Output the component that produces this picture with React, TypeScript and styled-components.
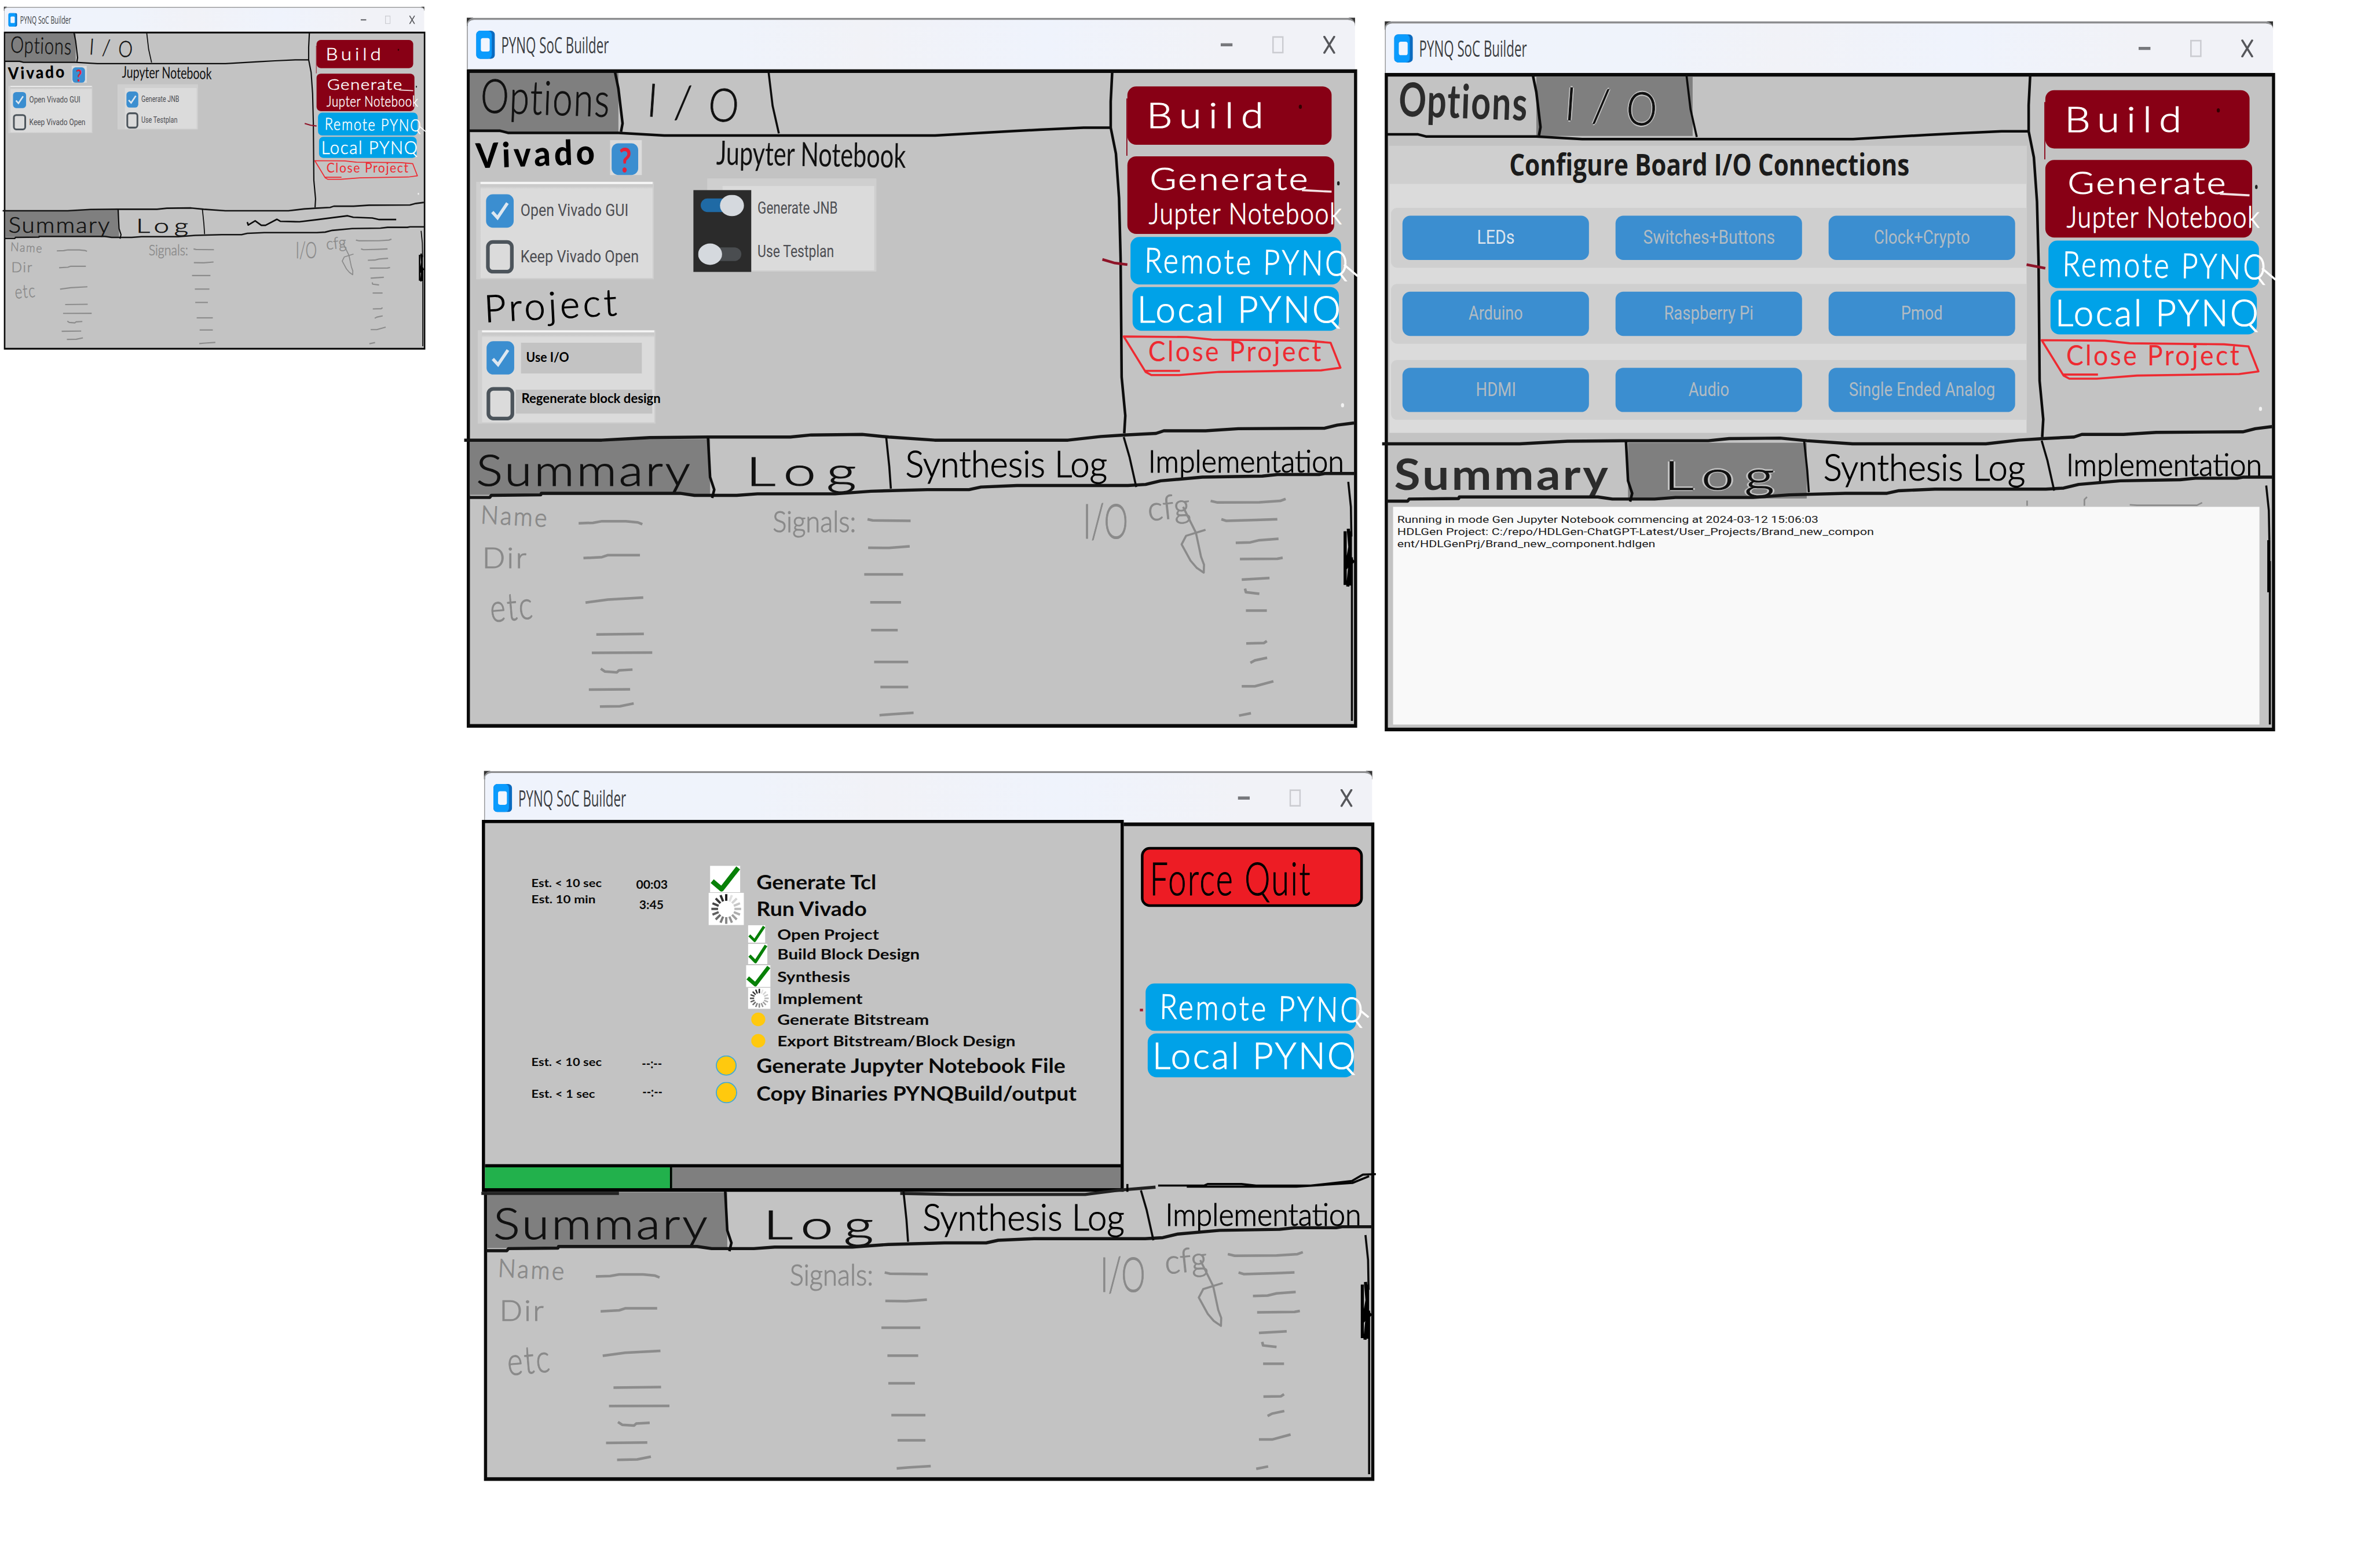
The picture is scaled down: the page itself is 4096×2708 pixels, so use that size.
import React, { useLayoutEffect, useRef, useState } from "react";
import styled, { createGlobalStyle, css } from "styled-components";

/* ---------- palette ---------- */
const grey = "#c3c3c3";
const darkGrey = "#7f7f7f";
const maroon = "#880015";
const sky = "#00a2e8";
const red = "#ed1c24";
const pencil = "#8a8a8a";

const Global = createGlobalStyle`
  html, body { margin: 0; padding: 0; background: #fff; }
  * { box-sizing: border-box; }
`;

const Viewport = styled.div`
  width: 4096px;
  height: 2708px;
  overflow: hidden;
  background: #fff;
`;

/* The canvas is laid out at 4553x3010 and scaled down to the viewport. */
const Canvas = styled.main`
  position: relative;
  width: 4553px;
  height: 3010px;
  transform: scale(0.89962);
  transform-origin: 0 0;
`;

/* ---------- text stretched to a given width ---------- */
const faces = {
  hand: `Lato, "Open Sans", sans-serif`,
  segoe: `"Open Sans", "Noto Sans", sans-serif`,
  roboto: `Roboto, "Liberation Sans", sans-serif`,
  calibri: `Lato, "Open Sans", sans-serif`,
};

type InkProps = {
  w: number;
  h: number;
  size: number;
  color?: string;
  weight?: number;
  face?: keyof typeof faces;
  tilt?: number;
  mt?: number;
  ml?: number;
  spacing?: number;
  halo?: boolean;
  children: string;
};

const InkBox = styled.span<{
  $w: number; $h: number; $size: number; $color: string; $weight: number; $spacing: number;
  $face: keyof typeof faces; $tilt: number; $mt: number; $ml: number; $halo: boolean;
}>`
  display: block;
  flex: none;
  width: ${(p) => p.$w}px;
  height: ${(p) => p.$h}px;
  margin-top: ${(p) => p.$mt}px;
  margin-left: ${(p) => p.$ml}px;
  line-height: ${(p) => p.$h}px;
  font-family: ${(p) => faces[p.$face]};
  font-size: ${(p) => p.$size}px;
  font-weight: ${(p) => p.$weight};
  letter-spacing: ${(p) => p.$spacing}px;
  color: ${(p) => p.$color};
  white-space: pre;
  transform: rotate(${(p) => p.$tilt}deg);
  ${(p) =>
    p.$weight === 300 &&
    css`
      -webkit-text-stroke: 1.3px ${p.$color};
    `}
  ${(p) =>
    p.$halo &&
    css`
      text-shadow: -3px 0 ${grey}, 3px 0 ${grey}, 0 -3px ${grey}, 0 3px ${grey};
    `}
`;

const InkRun = styled.span`
  display: inline-block;
  transform-origin: 0 50%;
`;

function Ink({
  w, h, size, color = "#111", weight = 400, face = "hand", tilt = 0, mt = 0, ml = 0, spacing = 0, halo = false, children,
}: InkProps) {
  const ref = useRef<HTMLSpanElement>(null);
  const [k, setK] = useState(1);
  useLayoutEffect(() => {
    const measure = () => {
      if (ref.current && ref.current.offsetWidth) setK(w / (ref.current.offsetWidth - spacing));
    };
    measure();
    document.fonts?.ready.then(measure);
  }, [w, spacing, children]);
  return (
    <InkBox
      $w={w} $h={h} $size={size} $color={color} $weight={weight} $face={face}
      $tilt={tilt} $mt={mt} $ml={ml} $spacing={spacing} $halo={halo}
    >
      <InkRun ref={ref} style={{ transform: `scaleX(${k})` }}>{children}</InkRun>
    </InkBox>
  );
}

/* ---------- window shell ---------- */
const Win = styled.section<{ $x: number; $y: number; $mini?: boolean }>`
  position: absolute;
  left: ${(p) => p.$x}px;
  top: ${(p) => p.$y}px;
  width: 1710px;
  height: 1367px;
  padding: 4px 0 0 1px;
  display: flex;
  flex-direction: column;
  ${(p) =>
    p.$mini &&
    css`
      transform: scale(0.4733, 0.4829);
      transform-origin: 0 0;
    `}
`;

const TitleBar = styled.header`
  flex: none;
  height: 99px;
  margin-right: 4px;
  padding: 0 38px 0 16px;
  display: flex;
  align-items: center;
  border-top: 4px solid #8c8d8f;
  border-left: 2px solid #9a9b9d;
  border-radius: 14px 14px 0 0;
  background: linear-gradient(90deg, #eff3fc 0, #eff3fb 30%, #f1f2f7 45%, #eff3fc 65%, #f1f2f7 85%);
`;

const Corners = styled.div`
  flex: none;
  background: linear-gradient(#333, #333) 0 0 / 12px 16px no-repeat,
    linear-gradient(#333, #333) calc(100% - 4px) 0 / 12px 16px no-repeat;
`;

const Controls = styled.div`
  margin-left: auto;
  display: flex;
  align-items: center;
  gap: 76px;
`;

const Body = styled.div`
  flex: 1;
  min-height: 0;
  display: flex;
  flex-direction: column;
  border: solid #0a0a0a;
  border-width: 7px 6px;
  background: ${grey};
`;

const Upper = styled.div`
  flex: none;
  height: 703px;
  display: flex;
`;

const MainArea = styled.div`
  flex: none;
  width: 1246px;
  display: flex;
  flex-direction: column;
`;

const TabRow = styled.nav<{ $h: number }>`
  flex: none;
  height: ${(p) => p.$h}px;
  display: flex;
`;

const Tab = styled.div<{ $w?: number; $on?: boolean; $pl: number }>`
  width: ${(p) => (p.$w ? `${p.$w}px` : "auto")};
  flex: ${(p) => (p.$w ? "none" : 1)};
  padding-left: ${(p) => p.$pl}px;
  display: flex;
  background: ${(p) => (p.$on ? darkGrey : "transparent")};
`;

const Over = styled.svg`
  position: absolute;
  left: 0;
  top: 0;
  width: 1710px;
  height: 1367px;
  overflow: visible;
  pointer-events: none;
`;

const AppIcon = () => (
  <svg width="36" height="54" viewBox="0 0 36 54">
    <rect width="36" height="54" rx="8" fill="#0b6bc0" />
    <rect width="30" height="54" rx="8" fill="#0a9bfd" />
    <rect x="9" y="14" width="17" height="26" rx="4" fill="#f1f5fd" />
  </svg>
);

const Chrome = () => (
  <Corners>
    <TitleBar>
      <AppIcon />
      <Ink w={207} h={60} size={43} face="segoe" color="#3c3e42" ml={12}>PYNQ SoC Builder</Ink>
      <Controls>
        <svg width="23" height="34"><path d="M0 17H23" stroke="#77787c" strokeWidth="6" /></svg>
        <svg width="22" height="34"><rect x="1.5" y="2" width="19" height="30" fill="none" stroke="#cbccd1" strokeWidth="3" /></svg>
        <svg width="23" height="34"><path d="M1 0L22 34M22 0L1 34" stroke="#56575b" strokeWidth="4" /></svg>
      </Controls>
    </TitleBar>
  </Corners>
);

/* ---------- side buttons ---------- */
const Side = styled.aside<{ $top: number; $left: number }>`
  flex: 1;
  padding: ${(p) => p.$top}px 0 0 ${(p) => p.$left}px;
  display: flex;
  flex-direction: column;
  align-items: flex-start;
`;

const SideButton = styled.div<{
  $w: number; $h: number; $bg: string; $mt?: number; $ml?: number; $pl: number; $outlined?: boolean;
}>`
  flex: none;
  width: ${(p) => p.$w}px;
  height: ${(p) => p.$h}px;
  margin: ${(p) => p.$mt ?? 0}px 0 0 ${(p) => p.$ml ?? 0}px;
  padding-left: ${(p) => p.$pl}px;
  display: flex;
  flex-direction: column;
  justify-content: center;
  border-radius: 17px;
  background: ${(p) => p.$bg};
  ${(p) => p.$outlined && css`border: 5px solid #000;`}
`;

const RemoteLocal = ({ mt, ml }: { mt: number; ml: number }) => (
  <>
    <SideButton $w={404} $h={91} $bg={sky} $mt={mt} $ml={ml} $pl={27}>
      <Ink w={390} h={80} size={66} weight={300} spacing={5} tilt={1} color="#fff">Remote PYNQ</Ink>
    </SideButton>
    <SideButton $w={396} $h={84} $bg={sky} $mt={5} $ml={ml + 4} $pl={9}>
      <Ink w={390} h={80} size={70} weight={300} spacing={4} mt={-2} color="#fff">Local PYNQ</Ink>
    </SideButton>
  </>
);

const BuildSide = () => (
  <Side $top={26} $left={16}>
    <SideButton $w={392} $h={112} $bg={maroon} $pl={37}>
      <Ink w={224} h={80} size={68} weight={300} spacing={12} color="#fff" mt={-4}>Build</Ink>
    </SideButton>
    <SideButton $w={397} $h={149} $bg={maroon} $mt={22} $pl={43}>
      <Ink w={303} h={66} size={60} weight={300} spacing={3} color="#fff">Generate</Ink>
      <Ink w={370} h={66} size={58} weight={300} color="#fff" spacing={2} ml={-2}>Jupter Notebook</Ink>
    </SideButton>
    <RemoteLocal mt={6} ml={6} />
    <SideButton $w={416} $h={75} $bg="transparent" $mt={11} $ml={-7} $pl={47}>
      <Ink w={332} h={54} size={53} color="#ee2a31" spacing={4} mt={-20}>Close Project</Ink>
    </SideButton>
  </Side>
);

const QuitSide = () => (
  <Side $top={40} $left={40}>
    <SideButton $w={426} $h={115} $bg={red} $ml={-7} $pl={12} $outlined>
      <Ink w={308} h={100} size={88} weight={300} color="#000" spacing={4}>Force Quit</Ink>
    </SideButton>
    <RemoteLocal mt={147} ml={2} />
  </Side>
);

/* ---------- options page ---------- */
const OptionsPage = styled.div`
  flex: 1;
  min-height: 0;
  display: flex;
`;

const OptionsColumn = styled.div<{ $w: number }>`
  flex: none;
  width: ${(p) => p.$w}px;
  padding-left: 11px;
  display: flex;
  flex-direction: column;
`;

const HeadingRow = styled.div<{ $h: number }>`
  flex: none;
  height: ${(p) => p.$h}px;
  display: flex;
`;

const Panel = styled.div<{ $w: number; $h: number; $ml: number; $pl: number; $line?: boolean }>`
  flex: none;
  width: ${(p) => p.$w}px;
  height: ${(p) => p.$h}px;
  margin-left: ${(p) => p.$ml}px;
  padding-left: ${(p) => p.$pl}px;
  display: flex;
  flex-direction: column;
  border: solid #cfcfcf;
  border-width: ${(p) => (p.$line ? "0 2px 2px 8px" : "14px 4px 2px 29px")};
  background: ${(p) =>
    p.$line ? "linear-gradient(#f4f4f4 0 4px, #cacaca 4px 9px, #dbdbdb 14px)" : "#dbdbdb"};
`;

const OptionRow = styled.label<{ $mt: number }>`
  height: 64px;
  margin-top: ${(p) => p.$mt}px;
  display: flex;
  align-items: center;
`;

const Box = styled.span<{ $on?: boolean; $w?: number }>`
  flex: none;
  width: ${(p) => p.$w ?? 53}px;
  height: 64px;
  display: grid;
  place-items: center;
  border-radius: 13px;
  border: ${(p) => (p.$on ? "none" : "7px solid #4c545b")};
  background: ${(p) => (p.$on ? "#3b8ed0" : "transparent")};
`;

const Tick = () => (
  <svg width="36" height="38" viewBox="0 0 36 38">
    <path d="M3 21L13 32L32 4" fill="none" stroke="#dde7f0" strokeWidth="6" />
  </svg>
);

const Check = ({ on, w }: { on?: boolean; w?: number }) => (
  <Box $on={on} $w={w}>{on && <Tick />}</Box>
);

const HelpTile = styled.div`
  width: 61px;
  height: 67px;
  margin: 15px 0 0 30px;
  padding: 6px 0 0 3px;
  background: #dcdcdc;
`;

const HelpFace = styled.div`
  width: 51px;
  height: 61px;
  border-radius: 13px;
  display: grid;
  place-items: center;
  background: #3b8ed0;
`;

const Patch = styled.div<{ $w: number; $h: number; $ml: number; $mt?: number; $pt: number; $pl: number }>`
  flex: none;
  width: ${(p) => p.$w}px;
  height: ${(p) => p.$h}px;
  margin: ${(p) => p.$mt ?? 0}px 0 0 ${(p) => p.$ml}px;
  padding: ${(p) => p.$pt}px 0 0 ${(p) => p.$pl}px;
  background: ${grey};
`;

const SwitchShift = styled.div`
  display: flex;
  margin-left: -11px;
`;

const SwitchTile = styled.div`
  flex: none;
  width: 111px;
  height: 157px;
  margin: -156px 0 0 -27px;
  padding: 9px 0 0 9px;
  background: #2b2b2b;
  position: relative;
`;

const OptionLabel = ({
  w, ml = 13, mt = -2, size = 33, children,
}: { w: number; ml?: number; mt?: number; size?: number; children: string }) => (
  <Ink w={w} h={50} size={size} face="roboto" color="#4d4e53" ml={ml} mt={mt}>{children}</Ink>
);

const Switches = () => (
  <SwitchTile>
    <svg width="96" height="140" viewBox="0 0 96 140">
      <rect x="5" y="7" width="78" height="26" rx="13" fill="#1f6aa5" />
      <ellipse cx="65" cy="20.500" rx="23" ry="20.500" fill="#d5d9de" />
      <rect x="12" y="101" width="71" height="26" rx="13" fill="#4a4d50" />
      <ellipse cx="23" cy="114" rx="23" ry="20.500" fill="#d5d9de" />
    </svg>
  </SwitchTile>
);

const Options = ({ mini }: { mini?: boolean }) => (
  <OptionsPage>
    <OptionsColumn $w={456}>
      <HeadingRow $h={95}>
        <Ink w={228} h={70} size={66} weight={900} color="#000" spacing={7} mt={5} tilt={-2}>Vivado</Ink>
        <HelpTile>
          <HelpFace>
            <Ink w={24} h={60} size={66} weight={700} color="#e3213a">?</Ink>
          </HelpFace>
        </HelpTile>
      </HeadingRow>
      <Panel $w={341} $h={187} $ml={1} $pl={11} $line>
        <OptionRow $mt={24}><Check on /><OptionLabel w={207}>Open Vivado GUI</OptionLabel></OptionRow>
        <OptionRow $mt={24}><Check /><OptionLabel w={227} mt={0}>Keep Vivado Open</OptionLabel></OptionRow>
      </Panel>
      {!mini && (
        <>
          <HeadingRow $h={98}>
            <Ink w={255} h={80} size={72} weight={300} color="#000" spacing={6} tilt={-3} ml={16} mt={8}>Project</Ink>
          </HeadingRow>
          <Panel $w={341} $h={179} $ml={4} $pl={9} $line>
            <OptionRow $mt={21}>
              <Check on />
              <Patch $w={232} $h={59} $ml={13} $pt={8} $pl={10}>
                <Ink w={82} h={38} size={25} weight={700} face="calibri" color="#000">Use I/O</Ink>
              </Patch>
            </OptionRow>
            <OptionRow $mt={24}>
              <Check />
              <Patch $w={262} $h={46} $ml={3} $mt={-8} $pt={0} $pl={11}>
                <Ink w={267} h={32} size={25} weight={700} face="calibri" color="#000">Regenerate block design</Ink>
              </Patch>
            </OptionRow>
          </Panel>
        </>
      )}
    </OptionsColumn>
    <OptionsColumn $w={400}>
      <HeadingRow $h={89}>
        <Ink w={364} h={76} size={64} ml={6} mt={3} tilt={1}>Jupyter Notebook</Ink>
      </HeadingRow>
      <Panel $w={324} $h={178} $ml={-11} $pl={mini ? 6 : 66}>
        <OptionRow $mt={mini ? 14 : 8}>
          {mini && <Check on w={48} />}
          <OptionLabel w={154} ml={mini ? 12 : 1} mt={mini ? -2 : 3} size={32}>Generate JNB</OptionLabel>
        </OptionRow>
        <OptionRow $mt={mini ? 19 : 18}>
          {mini && <Check w={48} />}
          <OptionLabel w={147} ml={mini ? 12 : 1} mt={mini ? -2 : 7} size={32}>Use Testplan</OptionLabel>
        </OptionRow>
      </Panel>
      {!mini && <SwitchShift><Switches /></SwitchShift>}
    </OptionsColumn>
  </OptionsPage>
);

/* ---------- board I/O page ---------- */
const Board = styled.div`
  flex: none;
  width: 1223px;
  height: 551px;
  margin: 19px 0 0 3px;
  display: flex;
  flex-direction: column;
  background: #dbdbdb;
`;

const BoardTitle = styled.div`
  height: 73px;
  padding-left: 230px;
  background: #cfcfcf;
`;

const BoardRows = styled.div`
  padding: 46px 0 0 3px;
  display: flex;
  flex-direction: column;
  gap: 31px;
`;

const BoardRow = styled.div`
  height: 115px;
  padding-left: 22px;
  display: grid;
  grid-template-columns: repeat(3, 358px);
  column-gap: 51px;
  align-items: center;
  border-radius: 12px 0 0 12px;
  background: #cfcfcf;
`;

const BoardButton = styled.div`
  height: 85px;
  display: flex;
  align-items: center;
  justify-content: center;
  border-radius: 15px;
  background: #3b8ed0;
`;

const boardRows: [string, number][][] = [
  [["LEDs", 72], ["Switches+Buttons", 253], ["Clock+Crypto", 184]],
  [["Arduino", 104], ["Raspberry Pi", 172], ["Pmod", 80]],
  [["HDMI", 77], ["Audio", 78], ["Single Ended Analog", 281]],
];

const BoardPage = () => (
  <Board>
    <BoardTitle>
      <Ink w={768} h={70} size={58} weight={700} face="segoe" color="#1b1b1b">Configure Board I/O Connections</Ink>
    </BoardTitle>
    <BoardRows>
      {boardRows.map((row) => (
        <BoardRow key={row[0][0]}>
          {row.map(([name, w]) => (
            <BoardButton key={name}>
              <Ink w={w} h={60} size={37} face="roboto" mt={-2} color={name === "LEDs" ? "#dce4ee" : "#b1bbc3"}>{name}</Ink>
            </BoardButton>
          ))}
        </BoardRow>
      ))}
    </BoardRows>
  </Board>
);

/* ---------- progress page ---------- */
const Progress = styled.div`
  position: relative;
  flex: none;
  width: 1232px;
  height: 714px;
  margin: -12px 0 0 -10px;
  display: flex;
  flex-direction: column;
  border: 6px solid #000;
  border-bottom-width: 7px;
  background: ${grey};
`;

const Steps = styled.div`
  flex: 1;
  min-height: 0;
  padding: 81px 0 0 89px;
  display: grid;
  grid-template-columns: 201px 139px 1fr;
  align-items: start;
`;

const Column = styled.div`
  display: flex;
  flex-direction: column;
  align-items: flex-start;
`;

const StepRow = styled.div<{ $h: number; $pl?: number }>`
  flex: none;
  height: ${(p) => p.$h}px;
  padding-left: ${(p) => p.$pl ?? 0}px;
  display: flex;
  align-items: center;
`;

const Mark = styled.div<{ $w: number }>`
  flex: none;
  width: ${(p) => p.$w}px;
  display: flex;
  align-items: center;
`;

const Bar = styled.div`
  flex: none;
  height: 46px;
  display: flex;
  border-top: 6px solid #000;
  background: ${darkGrey};
`;

const BarDone = styled.div`
  width: 359px;
  border-right: 4px solid #000;
  background: #22b14c;
`;

const GreenCheck = ({ w, h, ml }: { w: number; h: number; ml: number }) => (
  <svg width={w + ml} height={h} viewBox={`${-ml} 0 ${w + ml} ${h}`}>
    <rect width={w} height={h} fill="#fff" />
    <path
      d={`M${w * 0.07} ${h * 0.58}L${w * 0.38} ${h * 0.88}L${w * 0.93} ${h * 0.08}`}
      fill="none" stroke="#078007" strokeWidth={w * 0.16} strokeLinejoin="round"
    />
  </svg>
);

const Spinner = ({ w, h, ml }: { w: number; h: number; ml: number }) => (
  <svg width={w + ml} height={h} viewBox={`${-ml} 0 ${w + ml} ${h}`}>
    <rect width={w} height={h} fill="#fff" />
    {Array.from({ length: 16 }, (_, i) => {
      const a = (-i * Math.PI) / 8 - Math.PI / 2;
      const tone = 30 + i * 13;
      const r = w * 0.42;
      return (
        <line
          key={i}
          x1={w / 2 + Math.cos(a) * r * 0.55} y1={h / 2 + Math.sin(a) * r * 0.55}
          x2={w / 2 + Math.cos(a) * r} y2={h / 2 + Math.sin(a) * r}
          stroke={`rgb(${tone},${tone},${tone})`} strokeWidth={w * 0.065}
        />
      );
    })}
  </svg>
);

const Dot = ({ w, h, ml, ring }: { w: number; h: number; ml: number; ring?: boolean }) => (
  <svg width={w + ml} height={h} viewBox={`${-ml} 0 ${w + ml} ${h}`}>
    <ellipse cx={w / 2} cy={h / 2} rx={w / 2 - 1} ry={h / 2 - 1} fill="#ffc90e" stroke={ring ? "#3fa9d6" : "none"} strokeWidth="2" />
  </svg>
);

const Big = ({ w, mt = 0, children }: { w: number; mt?: number; children: string }) => (
  <Ink w={w} h={50} size={39} weight={700} face="calibri" color="#0a0a0a" mt={mt}>{children}</Ink>
);
const Small = ({ w, children }: { w: number; children: string }) => (
  <Ink w={w} h={36} size={28} weight={700} face="calibri" color="#0a0a0a">{children}</Ink>
);
const Est = ({ w, mt = 0, ml = 0, size = 22, children }: { w: number; mt?: number; ml?: number; size?: number; children: string }) => (
  <Ink w={w} h={30} size={size} weight={700} face="calibri" color="#0a0a0a" mt={mt} ml={ml}>{children}</Ink>
);

const ProgressPage = () => (
  <Progress>
    <Steps>
      <Column>
        <Est w={135} mt={19}>{"Est. < 10 sec"}</Est>
        <Est w={123} mt={1}>Est. 10 min</Est>
        <Est w={135} mt={282}>{"Est. < 10 sec"}</Est>
        <Est w={122} mt={32}>{"Est. < 1 sec"}</Est>
      </Column>
      <Column>
        <Est w={61} mt={21} size={24}>00:03</Est>
        <Est w={47} mt={9} ml={6} size={24}>3:45</Est>
        <Est w={39} mt={275} ml={11} size={26}>--:--</Est>
        <Est w={39} mt={24} ml={12} size={26}>--:--</Est>
      </Column>
      <Column>
        <StepRow $h={53}><Mark $w={92}><GreenCheck w={58} h={51} ml={3} /></Mark><Big w={230} mt={8}>Generate Tcl</Big></StepRow>
        <StepRow $h={62}><Mark $w={92}><Spinner w={68} h={62} ml={0} /></Mark><Big w={212} mt={-3}>Run Vivado</Big></StepRow>
        <StepRow $h={33} $pl={72}><Mark $w={60}><GreenCheck w={33} h={34} ml={4} /></Mark><Small w={195}>Open Project</Small></StepRow>
        <StepRow $h={44} $pl={72}><Mark $w={60}><GreenCheck w={37} h={39} ml={4} /></Mark><Small w={273}>Build Block Design</Small></StepRow>
        <StepRow $h={42} $pl={72}><Mark $w={60}><GreenCheck w={47} h={42} ml={0} /></Mark><Small w={140}>Synthesis</Small></StepRow>
        <StepRow $h={42} $pl={72}><Mark $w={60}><Spinner w={43} h={41} ml={4} /></Mark><Small w={164}>Implement</Small></StepRow>
        <StepRow $h={40} $pl={72}><Mark $w={60}><Dot w={29} h={28} ml={9} /></Mark><Small w={291}>Generate Bitstream</Small></StepRow>
        <StepRow $h={42} $pl={72}><Mark $w={60}><Dot w={29} h={28} ml={9} /></Mark><Small w={457}>Export Bitstream/Block Design</Small></StepRow>
        <StepRow $h={52}><Mark $w={92}><Dot w={40} h={39} ml={14} ring /></Mark><Big w={593}>Generate Jupyter Notebook File</Big></StepRow>
        <StepRow $h={53}><Mark $w={92}><Dot w={41} h={41} ml={14} ring /></Mark><Big w={615}>Copy Binaries PYNQBuild/output</Big></StepRow>
      </Column>
    </Steps>
    <Bar><BarDone /></Bar>
  </Progress>
);

/* ---------- lower pane ---------- */
const SummaryPane = styled.div`
  flex: 1;
  min-height: 0;
  display: flex;
`;

const SummaryColumn = styled.div<{ $w: number; $pl?: number; $row?: boolean }>`
  flex: none;
  width: ${(p) => p.$w}px;
  padding-left: ${(p) => p.$pl ?? 0}px;
  display: flex;
  flex-direction: ${(p) => (p.$row ? "row" : "column")};
`;

const Summary = () => (
  <SummaryPane>
    <SummaryColumn $w={581} $pl={21}>
      <Ink w={127} h={50} size={48} weight={300} color={pencil} spacing={4} tilt={3} mt={15}>Name</Ink>
      <Ink w={85} h={50} size={54} weight={300} color={pencil} spacing={4} mt={30} ml={3}>Dir</Ink>
      <Ink w={82} h={70} size={74} weight={300} color={pencil} spacing={4} mt={33} ml={17} tilt={-5}>etc</Ink>
    </SummaryColumn>
    <SummaryColumn $w={596}>
      <Ink w={160} h={60} size={58} weight={300} color={pencil} mt={20}>Signals:</Ink>
    </SummaryColumn>
    <SummaryColumn $w={300} $row>
      <Ink w={86} h={92} size={92} weight={300} color={pencil} mt={3}>I/O</Ink>
      <Ink w={82} h={60} size={64} weight={300} color={pencil} mt={-8} ml={37} tilt={-6}>cfg</Ink>
    </SummaryColumn>
  </SummaryPane>
);

const LogPane = styled.pre`
  flex: none;
  width: 1663px;
  height: 418px;
  margin: 16px 0 0 10px;
  padding: 13px 0 0 8px;
  background: #f9f9f9;
`;

const Log = () => (
  <LogPane>
    <Ink w={808} h={23} size={19} face="roboto" color="#1c1c1c">Running in mode Gen Jupyter Notebook commencing at 2024-03-12 15:06:03</Ink>
    <Ink w={915} h={23} size={19} face="roboto" color="#1c1c1c">HDLGen Project: C:/repo/HDLGen-ChatGPT-Latest/User_Projects/Brand_new_compon</Ink>
    <Ink w={495} h={23} size={19} face="roboto" color="#1c1c1c">ent/HDLGenPrj/Brand_new_component.hdlgen</Ink>
  </LogPane>
);

/* ---------- freehand rules ---------- */
type Pt = [number, number];
/* Turns sketch-grid points into a path in window coordinates. */
const trace = (ox: number, pts: Pt[]) =>
  "M" + pts.map(([x, y]) => `${(ox + x * 0.574).toFixed(1)} ${(790 + y * 0.3827).toFixed(1)}`).join("L");
const L = (pts: Pt[]) => trace(-15, pts);
const R = (pts: Pt[]) => trace(845, pts);

const dashes = [
  L([[402, 482], [450, 480], [480, 472], [560, 472], [600, 478], [615, 487]]),
  L([[418, 657], [480, 652], [500, 642], [607, 642]]),
  L([[425, 880], [500, 865], [618, 855]]),
  L([[461, 1040], [620, 1037]]),
  L([[446, 1132], [648, 1131]]),
  L([[476, 1212], [490, 1226], [530, 1230], [537, 1220], [582, 1216]]),
  L([[436, 1317], [574, 1315]]),
  L([[473, 1402], [540, 1400], [586, 1386]]),
  L([[1368, 462], [1385, 468], [1512, 470]]),
  L([[1370, 605], [1440, 606], [1509, 598]]),
  L([[1357, 739], [1487, 739]]),
  L([[1377, 879], [1480, 879]]),
  L([[1380, 1018], [1469, 1018]]),
  L([[1390, 1178], [1504, 1178]]),
  L([[1411, 1304], [1504, 1304]]),
  L([[1408, 1445], [1450, 1440], [1522, 1433]]),
  R([[1017, 370], [1040, 378], [1180, 377], [1250, 370], [1268, 360]]),
  R([[1053, 462], [1070, 470], [1170, 466], [1240, 462]]),
  R([[1101, 580], [1150, 578], [1180, 567], [1244, 560]]),
  R([[1115, 662], [1240, 660], [1258, 655]]),
  R([[1121, 765], [1214, 757]]),
  R([[1132, 810], [1135, 828], [1180, 836]]),
  R([[1135, 920], [1205, 920]]),
  R([[1136, 1085], [1195, 1083], [1205, 1073]]),
  R([[1150, 1182], [1165, 1170], [1206, 1157]]),
  R([[1121, 1300], [1165, 1300], [1227, 1275]]),
  R([[1112, 1447], [1152, 1435]]),
];
const flourish = R([[925, 400], [968, 530], [985, 650], [995, 690], [994, 730], [970, 705], [950, 670], [920, 588], [935, 545], [1000, 515]]);

const waveTop =
  "M-4 815H260L352 810L464 809H622L662 805L760 804L811 809L899 815H1155L1218 808L1264 805L1324 802L1339 797H1419L1482 793L1648 792L1672 786L1704 782";
const waveBottom =
  "M5 925H45L48 921L143 920L144 917H410L438 921H519L559 918H708L777 913L885 910H965L988 905L1057 902H1270L1304 900L1333 893L1413 886L1528 884L1557 881H1637L1648 879H1706";
const topRule = "M5 221L65 221L80 225H292L380 230H900L1042 222L1101 219L1185 215H1237";
const sideRule = "M1240 106L1237 165L1237 215L1247 265L1253 350L1256 466L1258 694L1265 768L1263 802";

type Kind = "mini" | "options" | "board" | "progress";

const Rules = ({ kind }: { kind: Kind }) => {
  const running = kind === "progress";
  return (
    <Over viewBox="0 0 1710 1367" fill="none" strokeLinejoin="round">
      {!running && (
        <g stroke="#0c0c0c" strokeWidth="5">
          <path d={topRule} />
          <path d="M285 106L292 140L300 207L297 223" />
          <path d="M580 106L588 173L600 226" strokeWidth="4" />
          <path d={sideRule} />
          <path d={waveTop} strokeWidth="6" stroke="#151515" />
        </g>
      )}
      {running && (
        <g stroke="#050505" strokeWidth="4">
          <path d="M-4 815H260M800 815L899 817H1155L1218 809L1290 803" stroke="#222" strokeWidth="6" />
          <path d="M1295 800H1383L1390 797L1455 797L1483 800H1588L1667 791L1688 779L1713 778M1350 802H1560L1668 795L1700 782" />
          <path d="M1236 797V812" />
        </g>
      )}
      <path d={waveBottom} stroke="#151515" strokeWidth="6" />
      <g stroke="#0c0c0c" strokeWidth="4">
        <path d="M464 810L468 886L476 910L472 926" strokeWidth="5" />
        <path d="M806 809L812 866L815 908" />
        {kind !== "mini" && <path d="M1262 809L1273 847L1286 905" />}
        {kind === "mini" && (
          <path d="M988 860L992 872L1020 855L1045 873L1062 873L1108 849L1122 857L1200 859L1275 850L1395 835L1418 841L1495 844L1523 850H1592" strokeWidth="6" />
        )}
      </g>
      {kind !== "board" && (
        <>
          <g stroke="#8c8c8c" strokeWidth="5">{dashes.map((d) => <path key={d} d={d} />)}</g>
          <path d={flourish} stroke={pencil} strokeWidth="4" />
        </>
      )}
      {kind === "board" && (
        <g stroke="#8c8c8c" strokeWidth="3">
          <path d="M1234 924V934M1344 934V922L1349 917M1431 932L1445 933H1560L1570 928" />
        </g>
      )}
      <path d="M1693 895L1698 943L1699 1000M1700 1040V1354" stroke="#0c0c0c" strokeWidth="4" />
      {kind !== "board" ? (
        <path d="M1687 990V1093M1693 985L1696 1020L1689 1060L1697 1045L1692 1096M1697 990V1094M1704 1050L1694 1040" stroke="#000" strokeWidth="6" />
      ) : (
        <path d="M1698 1000V1100" stroke="#000" strokeWidth="6" />
      )}
      {!running && (
        <>
          <path d="M1268 159V269" stroke={maroon} strokeWidth="2" />
          <path d={kind === "board" ? "M1233 471L1269 478" : "M1221 468L1245 475L1269 478"} stroke="#8e1428" strokeWidth="5" />
          <path
            d="M1262 616L1383 617L1431 622L1612 624L1659 628L1678 676L1641 681L1445 684L1368 690H1315L1304 684Z M1304 682H1370"
            stroke="#ee2a31" strokeWidth="4"
          />
          <path d="M1604 335L1661 338" stroke="#f3e2e4" strokeWidth="4" />
          <ellipse cx="1601" cy="175" rx="3" ry="4" fill="#300" />
          <ellipse cx="1674" cy="322" rx="2.500" ry="4" fill="#222" />
          <ellipse cx="1682" cy="748" rx="3" ry="4" fill="#f2f2f2" />
          <path d="M1685 478L1711 500" stroke="#fff" strokeWidth="4" />
        </>
      )}
      {running && (
        <>
          <path d="M1260 463H1266" stroke="#a01c30" strokeWidth="5" />
          <path d="M1682 463L1699 477" stroke="#fff" strokeWidth="4" />
        </>
      )}
    </Over>
  );
};

/* ---------- assembled window ---------- */
const SketchWindow = ({ kind, x, y }: { kind: Kind; x: number; y: number }) => {
  const board = kind === "board";
  const mini = kind === "mini";
  return (
    <Win $x={x} $y={y} $mini={mini}>
      <Chrome />
      <Body>
        <Upper>
          {kind === "progress" ? (
            <>
              <ProgressPage />
              <QuitSide />
            </>
          ) : (
            <>
              <MainArea>
                <TabRow $h={114}>
                  <Tab $w={285} $pl={21} $on={!board}>
                    <Ink w={247} h={90} size={90} tilt={2} spacing={3} color={board ? "#2c2c2c" : "#111"} weight={board ? 700 : 300}>Options</Ink>
                  </Tab>
                  <Tab $w={300} $pl={56} $on={board}>
                    <Ink w={176} h={90} size={88} weight={300} tilt={4} mt={10} spacing={8} halo={board}>I / O</Ink>
                  </Tab>
                </TabRow>
                {board ? <BoardPage /> : <Options mini={mini} />}
              </MainArea>
              <BuildSide />
            </>
          )}
        </Upper>
        <TabRow $h={107}>
          <Tab $w={461} $pl={12} $on={!board}>
            <Ink w={411} h={90} size={84} mt={13} spacing={4} color={board ? "#2c2c2c" : "#111"} weight={board ? 700 : 300}>Summary</Ink>
          </Tab>
          <Tab $w={343} $pl={69} $on={board}>
            <Ink w={212} h={90} size={76} mt={16} spacing={14} weight={300} halo={board}>Log</Ink>
          </Tab>
          {!mini && (
            <>
              <Tab $w={464} $pl={32}>
                <Ink w={387} h={90} size={70} weight={300} mt={1} color="#000">Synthesis Log</Ink>
              </Tab>
              <Tab $pl={34}>
                <Ink w={376} h={90} size={60} weight={300} mt={-4} color="#000">Implementation</Ink>
              </Tab>
            </>
          )}
        </TabRow>
        {board ? <Log /> : <Summary />}
      </Body>
      <Rules kind={kind} />
    </Win>
  );
};

export default function App() {
  return (
    <Viewport>
      <Global />
      <Canvas>
        <SketchWindow kind="mini" x={7} y={11} />
        <SketchWindow kind="options" x={895} y={30} />
        <SketchWindow kind="board" x={2657} y={37} />
        <SketchWindow kind="progress" x={928} y={1476} />
      </Canvas>
    </Viewport>
  );
}
